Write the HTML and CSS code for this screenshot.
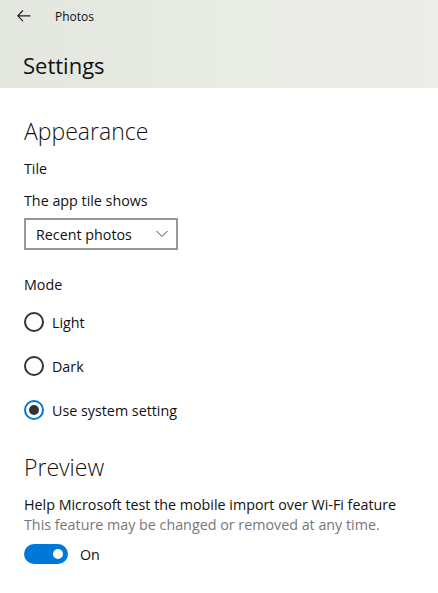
FILE: index.html
```html
<!DOCTYPE html>
<html>
<head>
<meta charset="utf-8">
<link rel="stylesheet" href="styles.css">
</head>
<body>
<header class="header">
  <div class="titlebar">
    <svg class="back" width="16" height="16" viewBox="0 0 16 16"><path d="M7 2.5 L1.8 7.8 L7 13.1 M2 7.8 H14.5" fill="none" stroke="#222" stroke-width="1.2"/></svg>
    <span class="apptitle">Photos</span>
  </div>
  <h1 class="pagetitle">Settings</h1>
</header>
<main class="content">
  <h2 class="section">Appearance</h2>
  <div class="label tile">Tile</div>
  <div class="label">The app tile shows</div>
  <div class="dropdown">
    <span>Recent photos</span>
    <svg class="chev" width="12" height="8" viewBox="0 0 12 8"><path d="M0.5 1 L6 6.5 L11.5 1" fill="none" stroke="#444" stroke-width="1"/></svg>
  </div>
  <div class="label mode">Mode</div>
  <div class="radios">
    <div class="radio"><span class="circle"></span><span>Light</span></div>
    <div class="radio"><span class="circle"></span><span>Dark</span></div>
    <div class="radio"><span class="circle checked"></span><span>Use system setting</span></div>
  </div>
  <h2 class="section preview">Preview</h2>
  <div class="label">Help Microsoft test the mobile import over Wi-Fi feature</div>
  <div class="sub">This feature may be changed or removed at any time.</div>
  <div class="toggle-row"><span class="toggle"><span class="knob"></span></span><span>On</span></div>
</main>
</body>
</html>
```
FILE: styles.css
```css
html, body { margin: 0; padding: 0; background: #fff; }
body { font-family: "Open Sans", "Noto Sans", sans-serif; color: #000; width: 438px; height: 593px; overflow: hidden; }
.header { height: 88px; background: linear-gradient(90deg, #e3e7df 0%, #e9ebe5 50%, #ecece8 100%); box-sizing: border-box; }
.titlebar { display: flex; align-items: center; height: 32px; padding-left: 16px; }
.back { margin-right: 23px; }
.apptitle { font-size: 12px; color: #111; }
.pagetitle { margin: 18px 0 0 23px; font-weight: 400; font-size: 22px; line-height: 30px; color: #111; }
.content { padding: 0 24px; }
.section { margin: 28px 0 0; font-weight: 300; font-size: 23px; line-height: 30px; color: #111; }
.label { font-size: 14.3px; line-height: 20px; color: #111; }
.tile { margin-top: 13px; }
.label + .label { margin-top: 12px; }
.dropdown { margin-top: 7px; width: 154px; height: 32px; box-sizing: border-box; border: 2px solid #999; display: flex; align-items: center; justify-content: space-between; padding: 0 8px 0 10px; font-size: 14.3px; color: #111; }
.mode { margin-top: 25px; }
.radios { display: flex; flex-direction: column; gap: 24px; margin-top: 17px; }
.radio { display: flex; align-items: center; gap: 8px; height: 20px; font-size: 14.3px; color: #111; }
.circle { width: 20px; height: 20px; box-sizing: border-box; border: 2px solid #333; border-radius: 50%; display: flex; align-items: center; justify-content: center; }
.circle.checked { border-color: #0078d7; }
.circle.checked::after { content: ""; width: 10px; height: 10px; border-radius: 50%; background: #333; }
.preview { margin-top: 32px; }
.preview + .label { margin-top: 13px; }
.sub { font-size: 14.3px; line-height: 20px; color: #777; }
.toggle-row { display: flex; align-items: center; gap: 12px; margin-top: 9px; font-size: 14.3px; color: #111; }
.toggle { width: 44px; height: 20px; border-radius: 10px; background: #0078d7; display: flex; align-items: center; justify-content: flex-end; padding-right: 5px; box-sizing: border-box; }
.knob { width: 10px; height: 10px; border-radius: 50%; background: #fff; }
```
